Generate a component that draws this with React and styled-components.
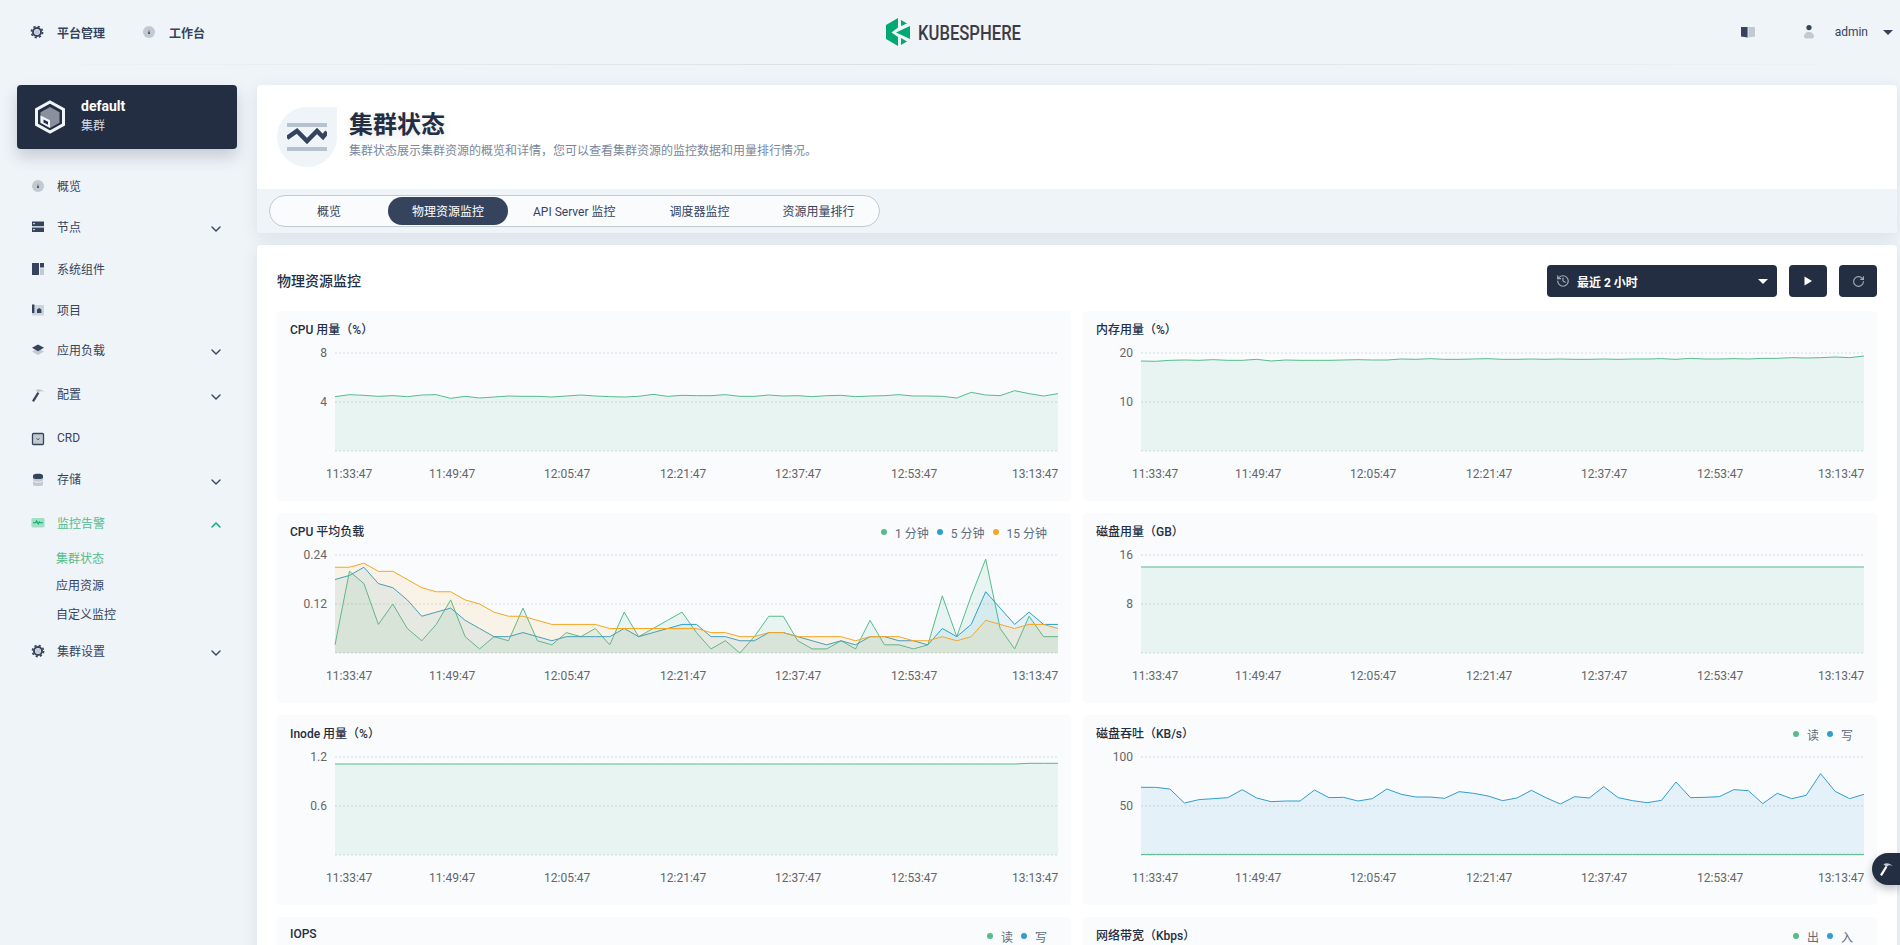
import React from 'react';
import styled, { createGlobalStyle } from 'styled-components';
import { ChevronDown, ChevronUp, History, RotateCw } from 'lucide-react';

const GREEN = '#55bc8a';
const BLUE = '#329dce';
const ORANGE = '#f5a623';
const DARK = '#36435c';
const LIGHT = '#c1c9d1';

const TIMES = ['11:33:47', '11:49:47', '12:05:47', '12:21:47', '12:37:47', '12:53:47', '13:13:47'];
const TIME_X = [49, 152, 267, 383, 498, 614, 735];

// y positions are read off the reference, counted from the top of the card
const fromZoom = list => list.map(y => y / 3 + 1);
const fromLoad = list => list.map(v => 140 - v * 4.083);
const flat = y => Array.from({ length: 51 }, () => y);

const cpuUsage = fromZoom([
  254, 248, 250, 253, 251, 254, 249, 248, 259, 253, 258, 255, 252, 253, 253, 255, 252, 249, 252, 254, 255, 253, 247, 253,
  250, 251, 251, 248, 253, 253, 249, 252, 251, 254, 251, 250, 254, 252, 251, 248, 252, 252, 253, 258, 241, 249, 251, 236,
  245, 252, 245,
]);

const memUsage = fromZoom([
  147, 148, 145, 144, 145, 143, 145, 145, 142, 147, 144, 145, 145, 145, 144, 143, 144, 144, 141, 142, 140, 142, 142, 141,
  140, 142, 142, 141, 142, 141, 142, 142, 141, 142, 141, 141, 140, 142, 139, 141, 141, 140, 141, 139, 139, 137, 138, 137,
  135, 137, 132,
]);

const load1 = fromLoad([
  2, 20, 17, 7, 12, 6, 3, 7, 13, 4, 1, 4, 3, 11, 3, 2, 5, 4, 6, 2, 10, 4, 6, 8, 10, 5, 1, 3, 0, 4, 9, 9, 3, 1, 1, 3, 1, 8, 2,
  2, 1, 2, 14, 4, 14, 23, 6, 1, 9, 4, 4,
]);
const load5 = fromLoad([
  18, 19, 21, 17, 16, 13, 9, 10, 11, 8, 6, 4, 4, 5, 4, 3, 4, 4, 4, 4, 6, 4, 5, 6, 7, 7, 4, 4, 3, 3, 5, 5, 4, 3, 2, 3, 2, 4, 4,
  3, 3, 2, 6, 4, 7, 15, 11, 7, 10, 7, 7,
]);
const load15 = fromLoad([
  21, 21, 22, 20, 20, 18, 16, 15, 15, 13, 12, 10, 9, 9, 8, 7, 7, 7, 7, 6, 6, 6, 6, 6, 6, 6, 5, 5, 4, 4, 5, 5, 4, 4, 4, 4, 3, 4,
  4, 4, 3, 3, 4, 3, 4, 8, 7, 6, 7, 7, 6,
]);

const diskWrite = [
  232, 232, 237, 279, 269, 266, 263, 239, 264, 275, 273, 273, 240, 263, 262, 273, 266, 237, 253, 261, 261, 265, 245, 250, 258,
  272, 264, 241, 263, 282, 260, 264, 230, 263, 272, 278, 271, 216, 263, 262, 260, 239, 242, 281, 250, 266, 256, 191, 244, 266,
  253,
].map(y => (y - 15) / 3);

const inode = flat(49).map((y, i) => (i > 47 ? 48.3 : y));

const CHARTS = [
  { title: 'CPU 用量（%）', ticks: ['8', '4'], series: [{ color: GREEN, ys: cpuUsage }] },
  { title: '内存用量（%）', ticks: ['20', '10'], series: [{ color: GREEN, ys: memUsage }] },
  {
    title: 'CPU 平均负载',
    ticks: ['0.24', '0.12'],
    legend: [
      { color: GREEN, label: '1 分钟' },
      { color: BLUE, label: '5 分钟' },
      { color: ORANGE, label: '15 分钟' },
    ],
    series: [
      { color: GREEN, ys: load1 },
      { color: BLUE, ys: load5 },
      { color: ORANGE, ys: load15 },
    ],
  },
  { title: '磁盘用量（GB）', ticks: ['16', '8'], series: [{ color: GREEN, ys: flat(54) }] },
  { title: 'Inode 用量（%）', ticks: ['1.2', '0.6'], series: [{ color: GREEN, ys: inode }] },
  {
    title: '磁盘吞吐（KB/s）',
    ticks: ['100', '50'],
    legend: [
      { color: GREEN, label: '读' },
      { color: BLUE, label: '写' },
    ],
    series: [
      { color: BLUE, ys: diskWrite },
      { color: GREEN, ys: flat(139.4) },
    ],
  },
  // these two only show their heads above the fold
  {
    title: 'IOPS',
    legend: [
      { color: GREEN, label: '读' },
      { color: BLUE, label: '写' },
    ],
  },
  {
    title: '网络带宽（Kbps）',
    legend: [
      { color: GREEN, label: '出' },
      { color: BLUE, label: '入' },
    ],
  },
];

const GearIcon = ({ dark = DARK }) => (
  <svg width='16' height='16' viewBox='0 0 16 16'>
    <circle cx='8' cy='8' r='5.6' fill='none' stroke={dark} strokeWidth='1.6' strokeDasharray='2.2 2.2' />
    <circle cx='8' cy='8' r='4' fill='none' stroke={dark} strokeWidth='2' />
    <circle cx='8' cy='8' r='2.6' fill={LIGHT} />
  </svg>
);

const DialIcon = () => (
  <svg width='16' height='16' viewBox='0 0 16 16'>
    <circle cx='8' cy='8' r='6' fill={LIGHT} />
    <path d='M7.4 9.2 8 5.2l.6 4z' fill={DARK} />
    <circle cx='8' cy='9.2' r='.9' fill={DARK} />
  </svg>
);

const NodeIcon = () => (
  <svg width='16' height='16' viewBox='0 0 16 16'>
    <rect x='2' y='2.5' width='12' height='4.6' fill={DARK} />
    <rect x='2' y='8.4' width='12' height='4.6' fill={DARK} />
    <rect x='3' y='4' width='2' height='1.2' fill={LIGHT} />
    <rect x='3' y='10' width='2' height='1.2' fill={LIGHT} />
    <rect x='2' y='7.1' width='12' height='1.3' fill={LIGHT} />
  </svg>
);

const ComponentIcon = () => (
  <svg width='16' height='16' viewBox='0 0 16 16'>
    <rect x='2' y='2' width='7' height='12' fill={DARK} />
    <rect x='10' y='2' width='4' height='4.5' fill={DARK} />
    <rect x='10' y='7.5' width='4' height='6.5' fill={LIGHT} />
  </svg>
);

const ProjectIcon = () => (
  <svg width='16' height='16' viewBox='0 0 16 16'>
    <rect x='2' y='3' width='12' height='10.5' fill={LIGHT} opacity='.75' />
    <rect x='2' y='2.5' width='2.4' height='8.5' fill={DARK} />
    <path d='M7 11V7.6L9.2 6l2.2 1.6V11z' fill={DARK} />
  </svg>
);

const LayersIcon = () => (
  <svg width='16' height='16' viewBox='0 0 16 16'>
    <path d='M2 9.6 8 6.4l6 3.2-6 3.4z' fill={LIGHT} />
    <path d='M2 5.8 8 2.6l6 3.2-6 3.4z' fill={DARK} />
  </svg>
);

const HammerIcon = ({ handle = DARK, head = LIGHT }) => (
  <svg width='16' height='16' viewBox='0 0 16 16'>
    <path d='M3 14.4 8.4 5.6' fill='none' stroke={handle} strokeWidth='2.2' />
    <path d='M5.4 3.2C8.4 1.6 11.6 2 14.6 5c-2.4-1.2-4.4-1-5.8 1z' fill={head} />
  </svg>
);

const CrdIcon = () => (
  <svg width='16' height='16' viewBox='0 0 16 16'>
    <rect x='2.5' y='2.5' width='11' height='11' rx='1' fill={LIGHT} stroke={DARK} strokeWidth='1.3' />
    <path d='M6.6 7.4 8 8.8l1.4-1.4' fill='none' stroke={DARK} />
  </svg>
);

const StorageIcon = () => (
  <svg width='16' height='16' viewBox='0 0 16 16'>
    <path d='M3 5h10v7.4c0 .9-2.2 1.6-5 1.6s-5-.7-5-1.6z' fill={LIGHT} />
    <path d='M3 3.4C3 2.5 5.2 1.8 8 1.8s5 .7 5 1.6v2c0 .9-2.2 1.6-5 1.6s-5-.7-5-1.6z' fill={DARK} />
    <path d='M3 8.6c0 .9 2.2 1.6 5 1.6s5-.7 5-1.6' fill='none' stroke='#eff4f9' />
  </svg>
);

const MonitorIcon = () => (
  <svg width='16' height='16' viewBox='0 0 16 16'>
    <rect x='1.4' y='3' width='13.2' height='9.4' rx='1.4' fill='#a3e0c3' />
    <path d='M3 7.8h2.6l1-1.8 1.6 3 1.2-2 .7.8H13' fill='none' stroke='#00aa72' strokeWidth='1.1' />
  </svg>
);

const BookIcon = () => (
  <svg width='16' height='16' viewBox='0 0 16 16'>
    <path d='M1 3h6.6v10.6L1 12.4z' fill={DARK} />
    <path d='M8.4 3H15v9.4l-6.6 1.2z' fill={LIGHT} />
  </svg>
);

const UserIcon = () => (
  <svg width='16' height='16' viewBox='0 0 16 16'>
    <circle cx='8' cy='3.6' r='2.6' fill={DARK} />
    <path d='M3 13c0-3 2-5 5-5s5 2 5 5c0 1-2 1.6-5 1.6S3 14 3 13z' fill={LIGHT} />
  </svg>
);

const KubeLogo = () => (
  <svg width='136' height='28' viewBox='0 0 136 28' overflow='visible'>
    <path d='M0 7 12 0v9.5L5.5 14.5 12 19v9L0 21z' fill='#00a971' />
    <path d='M24 8v13L10 14.5z' fill='#00a971' />
    <path d='M15 2l6 3.5L15 8zM15 20l6 3.5L15 27z' fill='#00a971' />
    <text
      x='32'
      y='22'
      fontFamily='Roboto, sans-serif'
      fontWeight='500'
      fontSize='20'
      fill='#3e3a46'
      textLength='103'
      lengthAdjust='spacingAndGlyphs'
    >
      KUBESPHERE
    </text>
  </svg>
);

const ClusterIcon = () => (
  <svg width='32' height='34' viewBox='0 0 32 34'>
    <path d='M16 2 29.5 9.5v15L16 32 2.5 24.5v-15z' fill='none' stroke='#eff4f9' strokeWidth='3' />
    <path d='M16 7 25.5 12.3v10.4L16 28l-9.5-5.3V12.3z' fill='#89919f' />
    <path d='M6.5 15.5l9.5 4.8V28l-9.5-5.3z' fill='#eff4f9' />
    <path d='M9.5 19.5l4.5 2.3v3l-4.5-2.3z' fill='#242e42' />
  </svg>
);

const StatusIcon = () => (
  <svg width='40' height='30' viewBox='0 0 40 30'>
    <rect x='0' y='1' width='40' height='4' fill='#b6c2cd' />
    <path d='M0 16 10 9 20 19 30 9 36 15 40 10' fill='none' stroke={DARK} strokeWidth='4.5' />
    <rect x='0' y='25' width='40' height='4' fill='#b6c2cd' />
  </svg>
);

const NAV_TOP = [
  { label: '概览', icon: <DialIcon />, h: 40 },
  { label: '节点', icon: <NodeIcon />, h: 42, more: true },
  { label: '系统组件', icon: <ComponentIcon />, h: 42 },
  { label: '项目', icon: <ProjectIcon />, h: 40 },
  { label: '应用负载', icon: <LayersIcon />, h: 40, more: true },
  { label: '配置', icon: <HammerIcon />, h: 49, more: true },
  { label: 'CRD', icon: <CrdIcon />, h: 40 },
  { label: '存储', icon: <StorageIcon />, h: 41, more: true },
];

const NavRow = ({ label, icon, h, more }) => (
  <NavItem $h={h}>
    <IconSlot>{icon}</IconSlot>
    <NavLabel>{label}</NavLabel>
    {more && (
      <Chevron>
        <ChevronDown size={16} color={DARK} strokeWidth={2} />
      </Chevron>
    )}
  </NavItem>
);

const Chart = ({ title, ticks, legend, series }) => {
  const left = 58;
  const step = 723 / 50;
  const line = ys => ys.map((y, i) => `${left + i * step},${y - 36}`).join(' ');

  return (
    <ChartCard>
      <ChartHead>
        <ChartTitle>{title}</ChartTitle>
        {legend && (
          <Legend>
            {legend.map(item => (
              <LegendItem key={item.label}>
                <LegendDot $color={item.color} />
                {item.label}
              </LegendItem>
            ))}
          </Legend>
        )}
      </ChartHead>
      {series && (
        <ChartSvg width='794' height='154' viewBox='0 0 794 154'>
          {[6, 55, 104].map(y => (
            <line key={y} x1={left} x2={781} y1={y} y2={y} stroke='#e0e6eb' strokeWidth='1.5' strokeDasharray='2 2' />
          ))}
          {ticks.map((t, i) => (
            <AxisText key={t} x='50' y={6 + i * 49 + 4} textAnchor='end'>
              {t}
            </AxisText>
          ))}
          {series.map(s => (
            <g key={s.color}>
              <polygon points={`${left},104 ${line(s.ys)} 781,104`} fill={s.color} fillOpacity='.1' />
              <polyline points={line(s.ys)} fill='none' stroke={s.color} strokeWidth='1' />
            </g>
          ))}
          {TIMES.map((t, i) => (
            <AxisText key={t} x={TIME_X[i]} y='131'>
              {t}
            </AxisText>
          ))}
        </ChartSvg>
      )}
    </ChartCard>
  );
};

export default function App() {
  return (
    <>
      <GlobalStyle />
      <Page>
        <Header>
          <HeaderLeft>
            <HeaderLink>
              <GearIcon />
              平台管理
            </HeaderLink>
            <HeaderLink>
              <DialIcon />
              工作台
            </HeaderLink>
          </HeaderLeft>
          <LogoSlot>
            <KubeLogo />
          </LogoSlot>
          <HeaderRight>
            <BookIcon />
            <UserBox>
              <UserIcon />
              <UserName>admin</UserName>
              <Caret $color={DARK} />
            </UserBox>
          </HeaderRight>
        </Header>

        <Body>
          <Aside>
            <ClusterCard>
              <ClusterIcon />
              <ClusterText>
                <ClusterName>default</ClusterName>
                <ClusterType>集群</ClusterType>
              </ClusterText>
            </ClusterCard>
            <Nav>
              {NAV_TOP.map(item => (
                <NavRow key={item.label} {...item} />
              ))}
              <NavItem $h={46} $active>
                <IconSlot>
                  <MonitorIcon />
                </IconSlot>
                <NavLabel>监控告警</NavLabel>
                <Chevron>
                  <ChevronUp size={16} color='#00aa72' strokeWidth={2} />
                </Chevron>
              </NavItem>
              <SubItem $h={24} $active>
                集群状态
              </SubItem>
              <SubItem $h={30}>应用资源</SubItem>
              <SubItem $h={28}>自定义监控</SubItem>
              <NavRow label='集群设置' icon={<GearIcon />} h={46} more />
            </Nav>
          </Aside>

          <Content>
            <TitleCard>
              <TitleBlock>
                <TitleIcon>
                  <StatusIcon />
                </TitleIcon>
                <TitleText>
                  <PageTitle>集群状态</PageTitle>
                  <PageDesc>集群状态展示集群资源的概览和详情，您可以查看集群资源的监控数据和用量排行情况。</PageDesc>
                </TitleText>
              </TitleBlock>
              <TabStrip>
                <Tabs>
                  <Tab>概览</Tab>
                  <Tab $active>物理资源监控</Tab>
                  <Tab $wide>API Server 监控</Tab>
                  <Tab>调度器监控</Tab>
                  <Tab>资源用量排行</Tab>
                </Tabs>
              </TabStrip>
            </TitleCard>

            <Panel>
              <PanelHead>
                <PanelTitle>物理资源监控</PanelTitle>
                <Controls>
                  <RangeSelect>
                    <History size={14} color='#a5adb9' />
                    <RangeText>最近 2 小时</RangeText>
                    <Caret $color='#fff' />
                  </RangeSelect>
                  <IconButton>
                    <svg width='12' height='12' viewBox='0 0 12 12'>
                      <path d='M2.5 1.5v9l7.5-4.5z' fill='#fff' />
                    </svg>
                  </IconButton>
                  <IconButton>
                    <RotateCw size={13} color='#a5adb9' />
                  </IconButton>
                </Controls>
              </PanelHead>
              <ChartGrid>
                {CHARTS.map(chart => (
                  <Chart key={chart.title} {...chart} />
                ))}
              </ChartGrid>
            </Panel>
          </Content>
        </Body>

        <ToolButton>
          <HammerIcon handle='#fff' head='#c1c9d1' />
        </ToolButton>
      </Page>
    </>
  );
}

const GlobalStyle = createGlobalStyle`
  html, body {
    margin: 0;
    height: 100%;
    overflow: hidden;
    background: #eff4f9;
  }

  body {
    font-family: Roboto, 'Noto Sans CJK SC', sans-serif;
    font-size: 12px;
    color: ${DARK};
  }
`;

const Page = styled.div`
  height: 945px;
  overflow: hidden;
  position: relative;
`;

const Header = styled.header`
  display: grid;
  grid-template-columns: 1fr auto 1fr;
  align-items: center;
  height: 64px;
  border-bottom: 1px solid;
  border-image: linear-gradient(90deg, #eff4f9, #d8dee5 50%, #eff4f9) 1;
`;

const HeaderLeft = styled.div`
  display: flex;
  align-items: center;
  gap: 36px;
  padding-left: 29px;
`;

const HeaderLink = styled.a`
  display: flex;
  align-items: center;
  gap: 12px;
  font-weight: 700;
  color: ${DARK};
`;

const LogoSlot = styled.div`
  display: flex;
  margin-left: 7px;
`;

const HeaderRight = styled.div`
  display: flex;
  align-items: center;
  justify-content: flex-end;
  gap: 45px;
  padding-right: 7px;
`;

const UserBox = styled.div`
  display: flex;
  align-items: center;
`;

const UserName = styled.span`
  margin: 0 15px 0 18px;
`;

const Caret = styled.span`
  width: 0;
  height: 0;
  border-left: 5px solid transparent;
  border-right: 5px solid transparent;
  border-top: 5px solid ${props => props.$color};
`;

const Body = styled.div`
  display: flex;
  padding-top: 20px;
`;

const Aside = styled.aside`
  width: 257px;
  flex-shrink: 0;
`;

const ClusterCard = styled.div`
  display: flex;
  align-items: center;
  gap: 15px;
  width: 220px;
  height: 64px;
  margin-left: 17px;
  padding-left: 17px;
  box-sizing: border-box;
  background: #242e42;
  border-radius: 4px;
  box-shadow: 0 8px 16px 0 rgba(36, 46, 66, 0.2);
`;

const ClusterText = styled.div`
  margin-top: -2px;
`;

const ClusterName = styled.div`
  font-size: 14px;
  font-weight: 700;
  line-height: 20px;
  color: #fff;
`;

const ClusterType = styled.div`
  line-height: 20px;
  color: #d8dee5;
`;

const Nav = styled.nav`
  margin-top: 16px;
`;

const NavItem = styled.div`
  display: flex;
  align-items: center;
  height: ${props => props.$h}px;
  padding: 0 33px 0 30px;
  color: ${props => (props.$active ? GREEN : DARK)};
`;

const IconSlot = styled.span`
  display: flex;
  width: 16px;
  margin: 2px 11px 0 0;
`;

const NavLabel = styled.span`
  flex: 1;
`;

const Chevron = styled.span`
  display: flex;
  margin-top: 6px;
`;

const SubItem = styled.div`
  display: flex;
  align-items: center;
  height: ${props => props.$h}px;
  padding-left: 56px;
  color: ${props => (props.$active ? GREEN : DARK)};
`;

const Content = styled.main`
  flex: 1;
  min-width: 0;
  margin-right: 3px;
`;

const TitleCard = styled.section`
  border-radius: 4px;
  overflow: hidden;
  background: #fff;
  box-shadow: 0 4px 16px 0 rgba(36, 46, 66, 0.1);
`;

const TitleBlock = styled.div`
  display: flex;
  gap: 12px;
  padding: 22px 20px;
`;

const TitleIcon = styled.div`
  display: flex;
  align-items: center;
  justify-content: center;
  width: 60px;
  height: 60px;
  background: #eff4f9;
  border-radius: 50% 0 50% 50%;
`;

const TitleText = styled.div`
  padding-top: 2px;
`;

const PageTitle = styled.h1`
  margin: 0;
  font-size: 24px;
  font-weight: 700;
  line-height: 32px;
  color: #242e42;
  text-shadow: 0 4px 8px rgba(36, 46, 66, 0.1);
`;

const PageDesc = styled.p`
  margin: 0;
  line-height: 20px;
  color: #79879c;
`;

const TabStrip = styled.div`
  padding: 6px 12px;
  background: #eff4f9;
`;

const Tabs = styled.div`
  display: inline-flex;
  height: 32px;
  padding: 1px 1px 1px 0;
  box-sizing: border-box;
  background: #f9fbfd;
  border: 1px solid #c1c9d1;
  border-radius: 16px;
`;

const Tab = styled.div`
  display: flex;
  align-items: center;
  justify-content: center;
  min-width: 118px;
  padding: 0 ${props => (props.$wide ? 25 : 24)}px 2px;
  box-sizing: border-box;
  border-radius: 14px;
  color: ${props => (props.$active ? '#fff' : DARK)};
  background: ${props => (props.$active ? DARK : 'transparent')};
`;

const Panel = styled.section`
  margin-top: 12px;
  padding: 20px;
  background: #fff;
  border-radius: 4px;
  box-shadow: 0 4px 16px 0 rgba(36, 46, 66, 0.1);
`;

const PanelHead = styled.div`
  display: flex;
  align-items: center;
  justify-content: space-between;
  margin-bottom: 14px;
`;

const PanelTitle = styled.h2`
  margin: -2px 0 0;
  font-size: 14px;
  font-weight: 500;
  color: #242e42;
`;

const Controls = styled.div`
  display: flex;
  gap: 12px;
`;

const RangeSelect = styled.div`
  display: flex;
  align-items: center;
  width: 230px;
  height: 32px;
  padding: 0 9px;
  box-sizing: border-box;
  background: #242e42;
  border-radius: 4px;
`;

const RangeText = styled.span`
  flex: 1;
  margin-left: 7px;
  font-weight: 700;
  color: #fff;
`;

const IconButton = styled.button`
  display: flex;
  align-items: center;
  justify-content: center;
  width: 38px;
  height: 32px;
  padding: 0;
  border: 0;
  background: #242e42;
  border-radius: 4px;
`;

const ChartGrid = styled.div`
  display: grid;
  grid-template-columns: 1fr 1fr;
  gap: 12px;
`;

const ChartCard = styled.div`
  height: 190px;
  overflow: hidden;
  background: #f9fbfd;
  border-radius: 4px;
`;

const ChartHead = styled.div`
  display: flex;
  align-items: center;
  justify-content: space-between;
  height: 36px;
  padding: 0 24px 2px 13px;
  box-sizing: border-box;
`;

const ChartTitle = styled.h3`
  margin: 0;
  font-size: 12px;
  font-weight: 500;
  color: #242e42;
`;

const Legend = styled.div`
  display: flex;
  gap: 8px;
  margin-top: 4px;
  color: #5f6b7e;
`;

const LegendItem = styled.span`
  display: flex;
  align-items: center;
  gap: 8px;
`;

const LegendDot = styled.i`
  width: 6px;
  height: 6px;
  border-radius: 50%;
  background: ${props => props.$color};
`;

const ChartSvg = styled.svg`
  display: block;
`;

const AxisText = styled.text`
  font-family: Roboto, sans-serif;
  font-size: 12px;
  fill: #666;
`;

const ToolButton = styled.div`
  position: absolute;
  top: 853px;
  right: 0;
  display: flex;
  align-items: center;
  justify-content: center;
  width: 28px;
  height: 32px;
  background: #242e42;
  border-radius: 16px 0 0 16px;
  box-shadow: 0 4px 8px 0 rgba(36, 46, 66, 0.3);
`;
